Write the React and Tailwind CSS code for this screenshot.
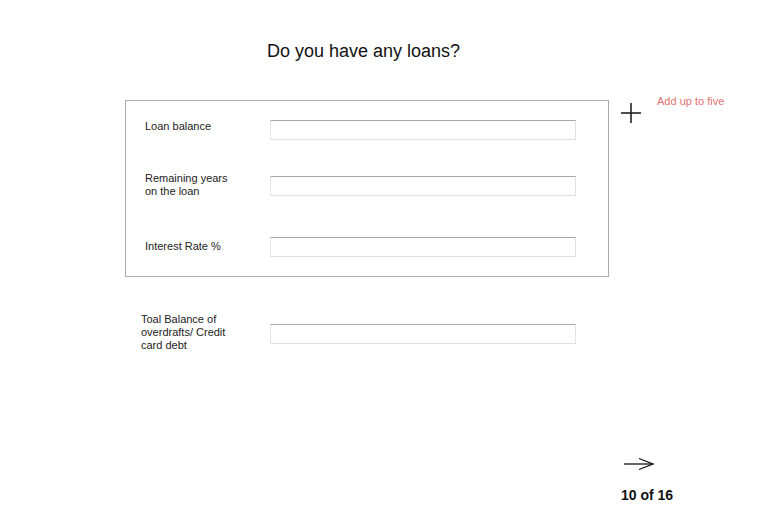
import React from "react";

function Field() {
  return (
    <div className="w-[306px] h-[20px] shrink-0 bg-white border border-[#e2e2e2] border-t-[#a8a8a8]" />
  );
}

export default function App() {
  return (
    <div className="w-[768px] h-[511px] bg-white overflow-hidden font-['Liberation_Sans',Arial,sans-serif] text-[#222]">
      <h1 className="pt-[40px] pl-[267px] text-[18px] leading-[22px] font-normal text-[#111]">
        Do you have any loans?
      </h1>

      <div className="flex items-start mt-[38px]">
        <div className="ml-[125px] w-[484px] border border-[#ababab] pl-[19px] pt-[19px] pb-[19px]">
          <div className="flex items-start">
            <div className="w-[125px] text-[11px] leading-[13px]">Loan balance</div>
            <Field />
          </div>
          <div className="flex items-start mt-[36px] h-[20px]">
            <div className="w-[125px] -mt-[4px] text-[11px] leading-[13px]">
              Remaining years
              <br />
              on the loan
            </div>
            <Field />
          </div>
          <div className="flex items-start mt-[41px]">
            <div className="w-[125px] mt-[3px] text-[11px] leading-[13px]">Interest Rate %</div>
            <Field />
          </div>
        </div>

        <svg className="ml-[11px] mt-[2px]" width="22" height="22" viewBox="0 0 22 22">
          <line x1="1" y1="11" x2="21" y2="11" stroke="#222" strokeWidth="1.6" />
          <line x1="11" y1="1" x2="11" y2="21" stroke="#222" strokeWidth="1.6" />
        </svg>
        <div className="ml-[15px] -mt-[5px] text-[11px] leading-[13px] text-[#e27272]">Add up to five</div>
      </div>

      <div className="flex items-start mt-[36px] pl-[141px]">
        <div className="w-[129px] shrink-0 text-[11px] leading-[13px]">
          <div className="w-[100px]">Toal Balance of overdrafts/ Credit card debt</div>
        </div>
        <div className="mt-[11px]">
          <Field />
        </div>
      </div>

      <div className="mt-[105px] pl-[621px]">
        <svg className="ml-[3px]" width="31" height="14" viewBox="0 0 31 14">
          <line x1="0" y1="7" x2="29" y2="7" stroke="#111" strokeWidth="1.3" />
          <polyline points="15,1.5 29,7 15,12.5" fill="none" stroke="#111" strokeWidth="1.3" />
        </svg>
        <div className="mt-[16px] text-[14px] leading-[16px] font-bold text-[#111]">10 of 16</div>
      </div>
    </div>
  );
}
